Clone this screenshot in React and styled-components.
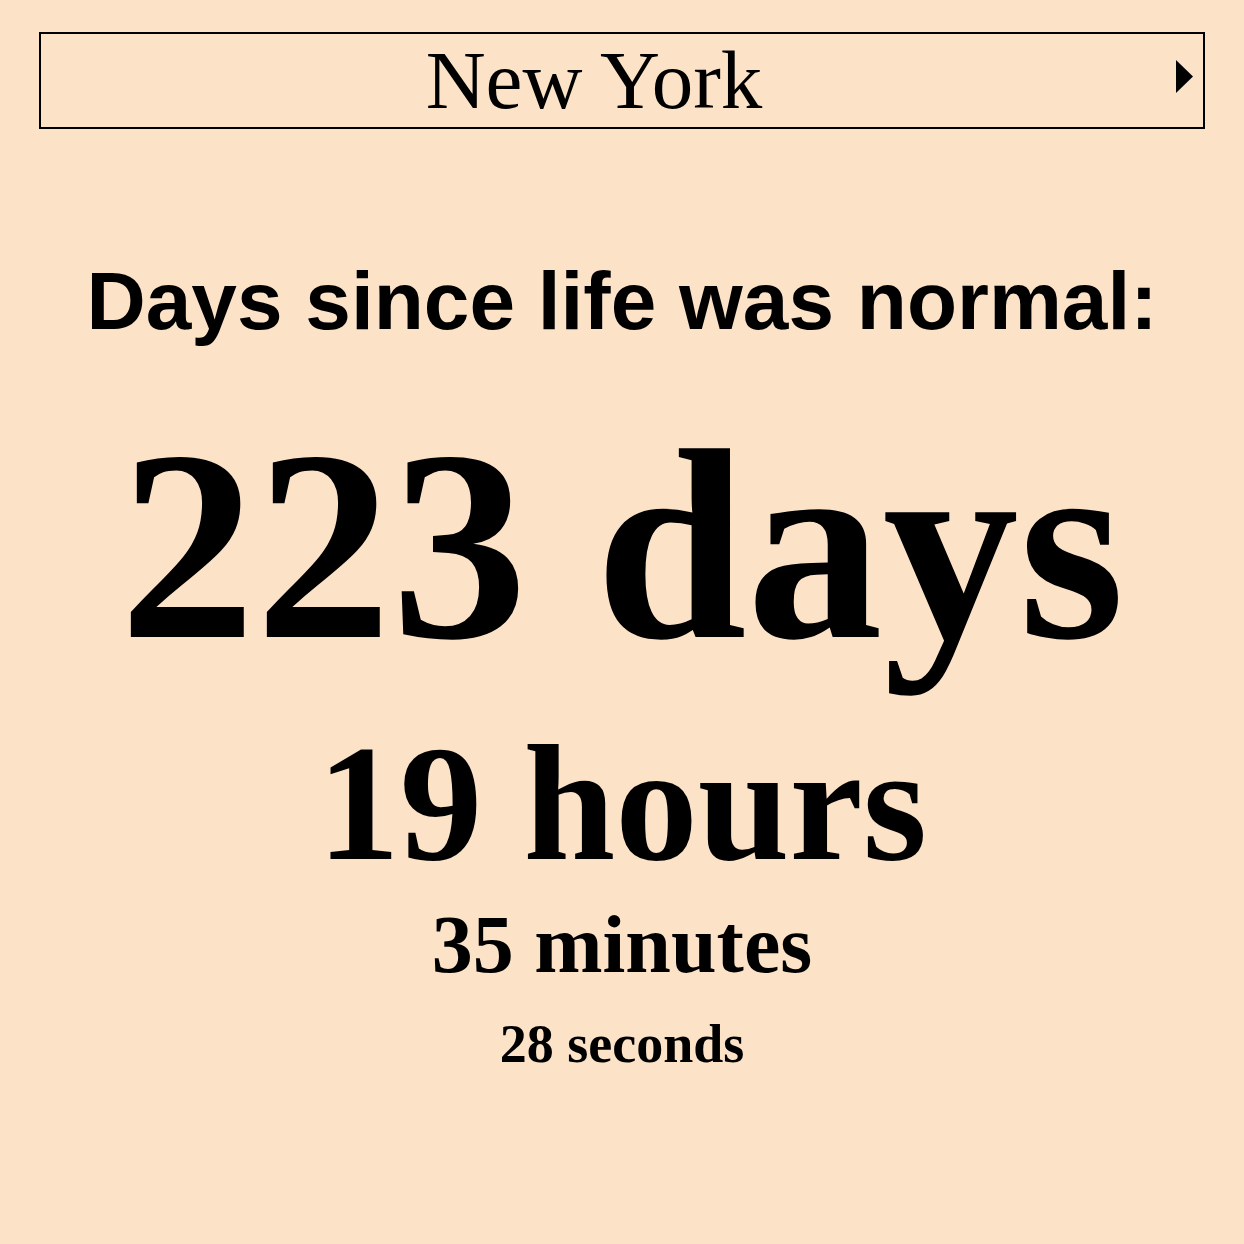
import React from "react";
import styled, { createGlobalStyle } from "styled-components";

const GlobalStyle = createGlobalStyle`
  html, body {
    margin: 0;
    padding: 0;
    background: #fce3c8;
    min-height: 100%;
  }
  body {
    font-family: "Liberation Serif", "Times New Roman", serif;
    color: #000;
  }
`;

const Page = styled.main`
  min-height: 1244px;
  padding: 32px 39px 0;
  box-sizing: border-box;
  display: flex;
  flex-direction: column;
  align-items: center;
`;

const CityPicker = styled.div`
  align-self: stretch;
  display: flex;
  align-items: center;
  height: 97px;
  box-sizing: border-box;
  border: 2px solid #000;
  padding: 0 10px 0 0;
  gap: 29px;
  cursor: pointer;
`;

const CityName = styled.span`
  flex: 1;
  text-align: center;
  font-family: "Liberation Serif", "Times New Roman", serif;
  font-size: 83px;
  line-height: 93px;
`;

const Arrow = styled.svg`
  width: 17px;
  height: 33px;
  flex: none;
  margin-bottom: 8px;
`;

const Heading = styled.h1`
  margin: 131px 0 0;
  font-family: "Liberation Sans", Arial, sans-serif;
  font-weight: 700;
  font-size: 82px;
  line-height: 1;
  text-align: center;
`;

const Unit = styled.div`
  margin-top: ${(p) => p.$gap}px;
  font-family: "Liberation Serif", "Times New Roman", serif;
  font-weight: 700;
  font-size: ${(p) => p.$size}px;
  line-height: 1;
  text-align: center;
  white-space: nowrap;
`;

const parts = [
  { label: "223 days", size: 272, gap: 68 },
  { label: "19 hours", size: 165, gap: 39 },
  { label: "35 minutes", size: 82, gap: 18 },
  { label: "28 seconds", size: 54, gap: 31 },
];

const App = () => {
  return (
    <>
      <GlobalStyle />
      <Page>
        <CityPicker>
          <CityName>New York</CityName>
          <Arrow viewBox="0 0 17 33">
            <path d="M0 0 L17 16.5 L0 33 Z" fill="#000" />
          </Arrow>
        </CityPicker>
        <Heading>Days since life was normal:</Heading>
        {parts.map((part) => (
          <Unit key={part.label} $size={part.size} $gap={part.gap}>
            {part.label}
          </Unit>
        ))}
      </Page>
    </>
  );
};

export default App;
